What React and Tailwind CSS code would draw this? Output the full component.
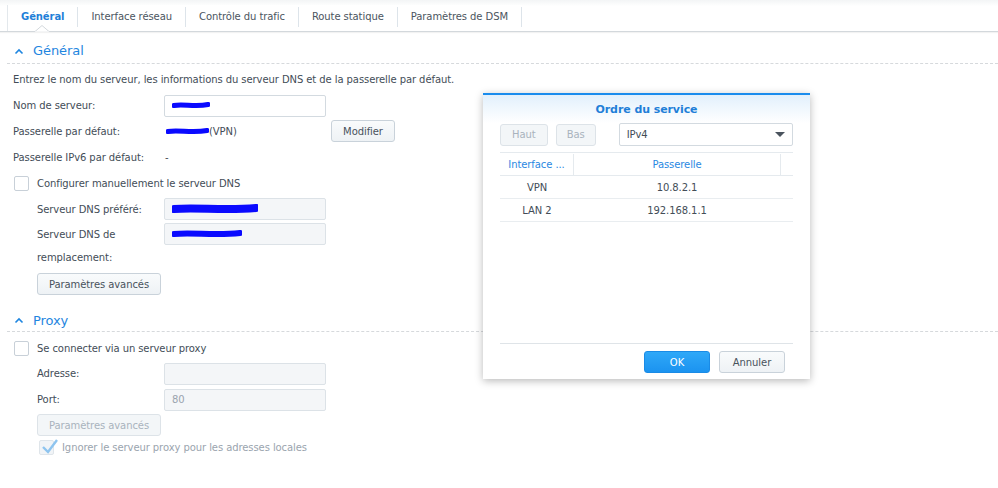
import React from "react";

const Scribble = ({ w = 44, h = 8 }) => (
  <svg width={w} height={h} viewBox={`0 0 ${w} ${h}`} className="block">
    <path d={`M2 ${h / 2} C ${w * 0.3} ${h / 2 - 2}, ${w * 0.6} ${h / 2 + 2}, ${w - 2} ${h / 2 - 1}`} stroke="#0a0aff" strokeWidth={h - 2} strokeLinecap="round" fill="none" />
  </svg>
);

const Chevron = () => (
  <svg width="10" height="7" viewBox="0 0 10 7" className="block">
    <path d="M1.5 5.5 L5 2 L8.5 5.5" stroke="#1f86e0" strokeWidth="1.6" fill="none" />
  </svg>
);

const Checkbox = ({ checked = false, disabled = false }) => (
  <div className={`w-[15px] h-[15px] rounded-[2px] border ${disabled ? "border-[#dfe5ea] bg-[#f1f4f7]" : "border-[#c8d0d8] bg-white"} relative shrink-0`}>
    {checked && (
      <svg width="18" height="16" viewBox="0 0 18 16" className="absolute left-[1px] top-[-3px]">
        <path d="M2 9 L7 14 L16 2" stroke="#8ec4ef" strokeWidth="2.4" fill="none" />
      </svg>
    )}
  </div>
);

const Btn = ({ children, className = "", disabled = false }) => (
  <div className={`h-[22px] flex items-center justify-center rounded-[3px] border ${disabled ? "border-[#dde3e8] bg-[#f3f6f8] text-[#a9b3bd]" : "border-[#c9d2da] bg-gradient-to-b from-[#f9fbfc] to-[#eef2f5] text-[#48525c]"} ${className}`}>
    {children}
  </div>
);

const Input = ({ disabled = false, children }) => (
  <div className={`w-[162px] h-[22px] border rounded-[2px] flex items-center px-[7px] ${disabled ? "bg-[#f4f6f8] border-[#dce2e7] text-[#9aa4ae]" : "bg-white border-[#d3dae0]"}`}>
    {children}
  </div>
);

const Tab = ({ children, active }) => (
  <div className="flex items-center">
    <div className={`px-[13px] ${active ? "font-bold text-[#1f7fd8]" : "text-[#4b5560]"}`}>{children}</div>
    <div className="w-px h-[20px] bg-[#dde4ea]" />
  </div>
);

export default function App() {
  return (
    <div className="w-[998px] h-[488px] bg-white relative overflow-hidden text-[10px] tracking-[-0.08px] text-[#434d57]" style={{ fontFamily: '"DejaVu Sans", Verdana, sans-serif' }}>
      {/* Tab bar */}
      <div className="h-[32px] border-b border-[#d3d8dc] bg-gradient-to-b from-[#f3f5f6] to-white to-[20%] flex pl-[7px] relative shadow-[0_1px_1px_rgba(0,0,0,0.05)]">
        <div className="flex items-center border-l border-[#e3e8ec] bg-white mt-[5px] pt-[1px] pb-[4px]">
          <Tab active>Général</Tab>
          <Tab>Interface réseau</Tab>
          <Tab>Contrôle du trafic</Tab>
          <Tab>Route statique</Tab>
          <Tab>Paramètres de DSM</Tab>
        </div>
        <svg width="14" height="7" viewBox="0 0 14 7" className="absolute left-[35px] bottom-[-1px]">
          <path d="M0 6.5 L7 0.5 L14 6.5" stroke="#d3d8dc" strokeWidth="1" fill="white" />
          <rect x="0" y="6.5" width="14" height="1" fill="white" />
        </svg>
      </div>

      {/* Général section */}
      <div className="h-[32px] pt-[7px] border-b border-dashed border-[#d6d9dc] ml-[7px] flex items-center gap-[9px] pl-[7px] text-[13px] text-[#1f86e0]">
        <Chevron />
        <span>Général</span>
      </div>
      <div className="pl-[13px]">
        <div className="h-[26px] flex items-center mt-[2px]">Entrez le nom du serveur, les informations du serveur DNS et de la passerelle par défaut.</div>
        <div className="h-[26px] flex items-center pt-[1px]">
          <div className="w-[151px]">Nom de serveur:</div>
          <Input><Scribble w={38} h={7} /></Input>
        </div>
        <div className="h-[26px] flex items-center">
          <div className="w-[151px]">Passerelle par défaut:</div>
          <div className="w-[167px] flex items-center pl-[2px]"><Scribble w={43} h={7} /><span>(VPN)</span></div>
          <Btn className="w-[64px]">Modifier</Btn>
        </div>
        <div className="h-[26px] flex items-center">
          <div className="w-[152px]">Passerelle IPv6 par défaut:</div>
          <div>-</div>
        </div>
        <div className="h-[26px] flex items-center gap-[8px] pl-[1px]">
          <Checkbox />
          <span>Configurer manuellement le serveur DNS</span>
        </div>
        <div className="pl-[24px]">
          <div className="h-[26px] flex items-center">
            <div className="w-[127px]">Serveur DNS préféré:</div>
            <Input disabled><Scribble w={86} h={10} /></Input>
          </div>
          <div className="flex items-start">
            <div className="w-[127px] pt-[1px] leading-[23px]">Serveur DNS de<br />remplacement:</div>
            <div className="mt-[1px]"><Input disabled><Scribble w={70} h={8} /></Input></div>
          </div>
          <Btn className="w-[124px] mt-[4px]">Paramètres avancés</Btn>
        </div>
      </div>

      {/* Proxy section */}
      <div className="h-[37px] pt-[15px] border-b border-dashed border-[#d6d9dc] ml-[7px] flex items-center gap-[9px] pl-[7px] text-[13px] text-[#1f86e0]">
        <Chevron />
        <span>Proxy</span>
      </div>
      <div className="pl-[13px]">
        <div className="h-[26px] flex items-center gap-[8px] pl-[1px] mt-[3px]">
          <Checkbox />
          <span>Se connecter via un serveur proxy</span>
        </div>
        <div className="pl-[24px]">
          <div className="h-[25px] flex items-center">
            <div className="w-[127px]">Adresse:</div>
            <Input disabled />
          </div>
          <div className="h-[26px] flex items-center pt-[1px]">
            <div className="w-[127px]">Port:</div>
            <Input disabled>80</Input>
          </div>
          <Btn disabled className="w-[124px] mt-[2px]">Paramètres avancés</Btn>
          <div className="h-[22px] flex items-center gap-[8px] pl-[2px] pt-[1px]">
            <Checkbox checked disabled />
            <span className="text-[#9aa4ae]">Ignorer le serveur proxy pour les adresses locales</span>
          </div>
        </div>
      </div>

      {/* Dialog */}
      <div className="absolute left-[483px] top-[93px] w-[327px] h-[286px] bg-white border-t-2 border-[#1a8ced] shadow-[0_2px_8px_rgba(0,0,0,0.28)] flex flex-col">
        <div className="bg-gradient-to-b from-[#e2f0fc] to-white">
          <div className="h-[28px] pt-[3px] flex items-center justify-center font-bold text-[11px] text-[#1f7fd8]">Ordre du service</div>
        </div>
        <div className="px-[17px] flex items-center">
          <Btn disabled className="w-[48px]">Haut</Btn>
          <Btn disabled className="w-[40px] ml-[8px]">Bas</Btn>
          <div className="ml-[23px] w-[175px] h-[23px] border border-[#d3dae0] rounded-[2px] flex items-center justify-between px-[7px]">
            <span>IPv4</span>
            <svg width="10" height="6" viewBox="0 0 10 6"><path d="M0 0 L10 0 L5 5 Z" fill="#4a545e" /></svg>
          </div>
        </div>
        <div className="mx-[17px] mt-[6px] border-t border-[#e5eaee]">
          <div className="h-[23px] pt-[1px] flex items-center border-b border-[#e5eaee] text-[#2a88e2]">
            <div className="w-[73px] text-center">Interface ...</div>
            <div className="w-px h-full bg-[#e5eaee]" />
            <div className="w-[206px] text-center">Passerelle</div>
            <div className="w-px h-full bg-[#e5eaee]" />
          </div>
          <div className="h-[23px] pt-[1px] flex items-center border-b border-[#e9edf0]">
            <div className="w-[74px] text-center">VPN</div>
            <div className="w-[206px] text-center">10.8.2.1</div>
          </div>
          <div className="h-[23px] pt-[1px] flex items-center border-b border-[#e9edf0]">
            <div className="w-[74px] text-center">LAN 2</div>
            <div className="w-[206px] text-center">192.168.1.1</div>
          </div>
        </div>
        <div className="flex-1" />
        <div className="mx-[17px] border-t border-[#dfe4e8] pt-[7px] pb-[6px] flex justify-end pr-[8px] gap-[9px]">
          <div className="w-[66px] h-[22px] rounded-[3px] border border-[#1a8be6] bg-gradient-to-b from-[#2fa8f8] to-[#1b93f0] text-white flex items-center justify-center">OK</div>
          <Btn className="w-[66px]">Annuler</Btn>
        </div>
      </div>
    </div>
  );
}
